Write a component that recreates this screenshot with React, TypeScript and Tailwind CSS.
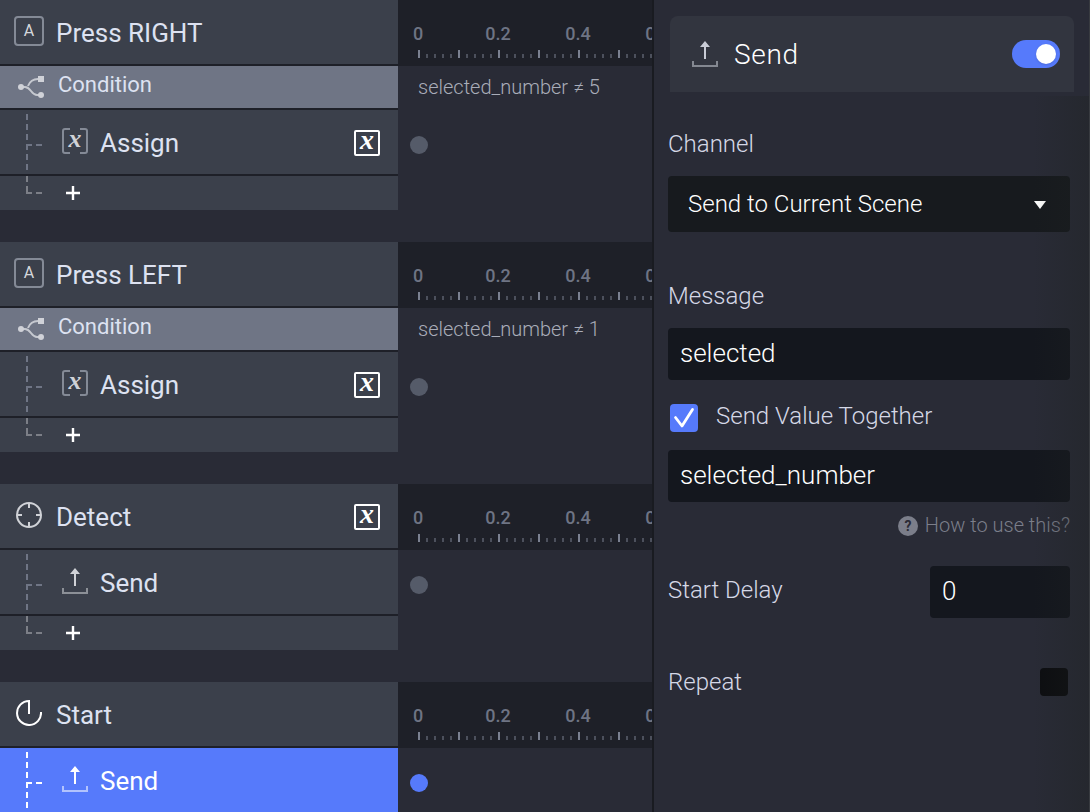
/**
 * Scene editor - trigger timeline with the response inspector
 */

import clsx from 'clsx';
import { useState } from 'react';
import type { JSX, ReactNode } from 'react';

type TriggerIcon = 'key' | 'detect' | 'start';

interface Action {
  kind: 'assign' | 'send';
  name: string;
  variable?: boolean;
  selected?: boolean;
}

interface Trigger {
  id: string;
  icon: TriggerIcon;
  name: string;
  variable?: boolean;
  condition?: string;
  action: Action;
  addable: boolean;
}

const TRIGGERS: Trigger[] = [
  {
    id: 'right',
    icon: 'key',
    name: 'Press RIGHT',
    condition: 'selected_number ≠ 5',
    action: { kind: 'assign', name: 'Assign', variable: true },
    addable: true,
  },
  {
    id: 'left',
    icon: 'key',
    name: 'Press LEFT',
    condition: 'selected_number ≠ 1',
    action: { kind: 'assign', name: 'Assign', variable: true },
    addable: true,
  },
  {
    id: 'detect',
    icon: 'detect',
    name: 'Detect',
    variable: true,
    action: { kind: 'send', name: 'Send' },
    addable: true,
  },
  {
    id: 'start',
    icon: 'start',
    name: 'Start',
    action: { kind: 'send', name: 'Send', selected: true },
    addable: false,
  },
];

const RULER_LABELS = ['0', '0.2', '0.4', '0.6'];
const RULER_TICKS = Array.from({ length: 51 }, (_, i) => i);

function SendIcon(): JSX.Element {
  return (
    <svg width="26" height="26" viewBox="0 0 26 26" className="shrink-0" aria-hidden="true">
      <path d="M1 20v5h24v-5" fill="none" stroke="currentColor" strokeWidth="2" opacity="0.55" />
      <path d="M13 0l5 6h-4v12h-2V6H8z" fill="currentColor" />
    </svg>
  );
}

function AssignIcon(): JSX.Element {
  return (
    <span className="relative flex size-[26px] shrink-0 justify-center">
      <svg width="26" height="26" viewBox="0 0 26 26" className="absolute inset-0" aria-hidden="true">
        <path
          d="M8 1H3a2 2 0 0 0-2 2v20a2 2 0 0 0 2 2h5M18 1h5a2 2 0 0 1 2 2v20a2 2 0 0 1-2 2h-5"
          fill="none"
          stroke="#848a96"
          strokeWidth="2"
        />
      </svg>
      <span className="font-['Liberation_Serif',serif] text-[26px] leading-[22px] font-bold italic">x</span>
    </span>
  );
}

function VariableBadge(): JSX.Element {
  return (
    <span className="mt-1 ml-auto flex size-[26px] items-center justify-center rounded-xs border-2 border-white pb-1.5 font-['Liberation_Serif',serif] text-[28px] leading-4 font-bold text-white italic">
      x
    </span>
  );
}

function TriggerGlyph({ icon }: { icon: TriggerIcon }): JSX.Element {
  if (icon === 'key') {
    return (
      <span className="flex size-[30px] items-center justify-center rounded border-2 border-[#848a96] text-base leading-5 text-[#d5d7dc]">
        A
      </span>
    );
  }
  if (icon === 'detect') {
    return (
      <svg width="26" height="26" viewBox="0 0 26 26" fill="none" stroke="#d0d2d7" strokeWidth="2" aria-hidden="true">
        <circle cx="13" cy="13" r="12" />
        <path d="M13 1v5M13 20v5M1 13h5M20 13h5" />
      </svg>
    );
  }
  return (
    <svg width="26" height="26" viewBox="0 0 26 26" fill="none" stroke="#fff" strokeWidth="2" aria-hidden="true">
      <path d="M13 14V1A12 12 0 1 0 25 12" />
    </svg>
  );
}

function ConditionIcon(): JSX.Element {
  return (
    <svg width="26" height="22" viewBox="0 0 26 22" className="shrink-0" aria-hidden="true">
      <path
        d="M3 11h4c6 0 6 8 12 8h4M10 10c2-5 5-7 10-7"
        fill="none"
        stroke="#c6c9d0"
        strokeWidth="2"
      />
      <circle cx="3" cy="11" r="3" fill="#d0d2d8" />
      <circle cx="23" cy="19" r="3" fill="#d0d2d8" />
      <rect x="20" width="6" height="6" fill="#d0d2d8" />
    </svg>
  );
}

function Ruler(): JSX.Element {
  return (
    <div className="flex h-[66px] flex-col overflow-hidden bg-[#1e2028] pt-6">
      <div className="-ml-5 flex text-lg leading-5 font-medium text-[#6e7484]">
        {RULER_LABELS.map((label) => (
          <span key={label} className="w-20 shrink-0 text-center">
            {label}
          </span>
        ))}
      </div>
      <div className="mt-1.5 flex h-2 items-end pl-[17px]">
        {RULER_TICKS.map((tick) => (
          <span key={tick} className="flex w-2 shrink-0 justify-center">
            <span className={clsx('w-0.5', tick % 5 === 0 ? 'h-2 bg-[#7b8191]' : 'h-1 bg-[#4c505c]')} />
          </span>
        ))}
      </div>
    </div>
  );
}

function TriggerBlock({ trigger }: { trigger: Trigger }): JSX.Element {
  const { action } = trigger;

  return (
    <section className="flex">
      {/* Tree column */}
      <div className="w-[398px] shrink-0 bg-[#1e2028] text-[#dde2f1]">
        <div className="flex h-16 items-center gap-3 bg-[#3b404b] pr-[18px] pb-0.5 pl-3.5">
          <span className="flex w-[30px] justify-center">
            <TriggerGlyph icon={trigger.icon} />
          </span>
          <h2 className="pt-1 text-[26px] leading-8">{trigger.name}</h2>
          {trigger.variable && <VariableBadge />}
        </div>

        {trigger.condition && (
          <div className="mt-0.5 flex h-[42px] items-center gap-3.5 bg-[#6f7585] pl-[18px]">
            <ConditionIcon />
            <span className="pb-1 text-[22px] leading-7">Condition</span>
          </div>
        )}

        <div
          className={clsx(
            'mt-0.5 flex h-16 items-center pr-[18px] pb-0.5 pl-[26px]',
            action.selected ? 'bg-[#567afb] text-white' : 'bg-[#3b404b]',
          )}
        >
          <svg
            width="16"
            height="64"
            viewBox="0 0 16 64"
            className={clsx('mt-0.5 mr-5 shrink-0', action.selected ? 'text-white' : 'text-[#6f7585]')}
            fill="none"
            stroke="currentColor"
            strokeWidth="2"
            aria-hidden="true"
          >
            <path d="M1 4v56M0 35h16" strokeDasharray="6 4" />
          </svg>
          <span className={action.selected ? 'text-white' : 'text-[#d0d2d7]'}>
            {action.kind === 'send' ? <SendIcon /> : <AssignIcon />}
          </span>
          <span className="pt-1 pl-3 text-[26px] leading-8">{action.name}</span>
          {action.variable && <VariableBadge />}
        </div>

        {trigger.addable && (
          <div className="mt-0.5 flex h-[34px] items-center bg-[#3b404b] pl-[26px]">
            <svg width="16" height="34" viewBox="0 0 16 34" className="mr-6" fill="none" stroke="#7c7f87" strokeWidth="2" aria-hidden="true">
              <path d="M1 0v6M1 10v7h5M10 17h6" />
            </svg>
            <button type="button" aria-label="Add action" className="text-white">
              <svg width="14" height="14" viewBox="0 0 14 14" stroke="currentColor" strokeWidth="2.4" aria-hidden="true">
                <path d="M7 0v14M0 7h14" />
              </svg>
            </button>
          </div>
        )}
      </div>

      {/* Track column */}
      <div className="min-w-0 flex-1">
        <Ruler />
        {trigger.condition && (
          <div className="flex h-11 items-center overflow-hidden pb-0.5 pl-5 text-xl leading-7 font-light whitespace-nowrap text-[#a9adb9]">
            {trigger.condition}
          </div>
        )}
        <div className="px-3 pt-[26px]">
          <div className={clsx('size-[18px] rounded-full', action.selected ? 'bg-[#567afb]' : 'bg-[#555b69]')} />
        </div>
      </div>
    </section>
  );
}

function FieldLabel({ htmlFor, children }: { htmlFor: string; children: ReactNode }): JSX.Element {
  return (
    <label htmlFor={htmlFor} className="text-2xl leading-8 font-light text-[#d5d8e6]">
      {children}
    </label>
  );
}

const INPUT_CLASS = 'h-[52px] rounded bg-[#14171e] px-3 pb-0.5 text-[26px] font-light text-white outline-none';

function Inspector(): JSX.Element {
  const [enabled, setEnabled] = useState(true);
  const [message, setMessage] = useState('selected');
  const [sendValue, setSendValue] = useState(true);
  const [value, setValue] = useState('selected_number');
  const [delay, setDelay] = useState('0');
  const [repeat, setRepeat] = useState(false);

  return (
    <aside className="relative w-[438px] shrink-0 overflow-hidden border-r border-l-2 border-r-[#383b40] border-l-[#191b21]">
      {/* Title */}
      <div className="pt-4 pr-[15px] pl-4">
        <div className="flex h-[76px] items-center rounded-t-lg bg-[#32353f] pr-3.5 pl-[22px] text-[#c9ccd6]">
          <SendIcon />
          <h1 className="pt-0.5 pl-4 text-[28px] leading-9 font-light tracking-wide text-white">Send</h1>
          <button
            type="button"
            role="switch"
            aria-checked={enabled}
            aria-label="Enabled"
            onClick={() => setEnabled(!enabled)}
            className={clsx(
              'ml-auto flex h-7 w-12 items-center rounded-full px-1',
              enabled ? 'justify-end bg-[#567afb]' : 'bg-[#14171e]',
            )}
          >
            <span className="size-5 rounded-full bg-white shadow" />
          </button>
        </div>
      </div>

      {/* Fields */}
      <div className="flex flex-col pt-9 pr-[19px] pl-3.5">
        <FieldLabel htmlFor="channel">Channel</FieldLabel>
        <div className="relative mt-4 flex flex-col">
          <select
            id="channel"
            className="h-14 appearance-none rounded bg-[#171a1e] px-5 text-2xl font-light text-white outline-none"
          >
            <option>Send to Current Scene</option>
          </select>
          <svg
            width="12"
            height="8"
            viewBox="0 0 12 8"
            className="pointer-events-none absolute top-[25px] right-6 fill-white"
            aria-hidden="true"
          >
            <path d="M0 0h12L6 8z" />
          </svg>
        </div>

        <div className="mt-12 flex flex-col gap-4">
          <FieldLabel htmlFor="message">Message</FieldLabel>
          <input
            id="message"
            type="text"
            value={message}
            onChange={(e) => setMessage(e.target.value)}
            className={INPUT_CLASS}
          />
        </div>

        <div className="mt-6 flex h-7 items-center gap-[18px] pl-0.5">
          <span className="relative flex size-7">
            <input
              id="send-value"
              type="checkbox"
              checked={sendValue}
              onChange={(e) => setSendValue(e.target.checked)}
              className="size-7 appearance-none rounded bg-[#0d0e11] checked:bg-[#567afb]"
            />
            {sendValue && (
              <svg
                width="28"
                height="28"
                viewBox="0 0 28 28"
                className="pointer-events-none absolute inset-0"
                fill="none"
                stroke="#fff"
                strokeWidth="2.8"
                strokeLinecap="round"
                strokeLinejoin="round"
                aria-hidden="true"
              >
                <path d="M5.500 13.500L12 22 22.500 5.500" />
              </svg>
            )}
          </span>
          <span className="flex pb-1">
            <FieldLabel htmlFor="send-value">Send Value Together</FieldLabel>
          </span>
        </div>
        <input
          type="text"
          aria-label="Value"
          value={value}
          onChange={(e) => setValue(e.target.value)}
          className={clsx(INPUT_CLASS, 'mt-[18px]')}
        />
        <a href="#help" className="mt-3 flex h-6 items-center gap-[7px] self-end text-xl leading-6 font-light text-[#7b7e8a]">
          <span className="flex size-5 items-center justify-center rounded-full bg-[#7b7e8a] text-sm leading-5 font-bold text-[#2a2b36]">
            ?
          </span>
          <span className="pb-0.5">How to use this?</span>
        </a>

        <div className="mt-7 flex items-center justify-between">
          <span className="flex pb-1">
            <FieldLabel htmlFor="delay">Start Delay</FieldLabel>
          </span>
          <input
            id="delay"
            type="text"
            value={delay}
            onChange={(e) => setDelay(e.target.value)}
            className={clsx(INPUT_CLASS, 'w-[140px]')}
          />
        </div>

        <div className="mt-12 flex items-center justify-between pr-0.5">
          <FieldLabel htmlFor="repeat">Repeat</FieldLabel>
          <input
            id="repeat"
            type="checkbox"
            checked={repeat}
            onChange={(e) => setRepeat(e.target.checked)}
            className="size-7 appearance-none rounded bg-[#0d0e11] checked:bg-[#567afb]"
          />
        </div>
      </div>

      {/* Edge shade */}
      <div className="pointer-events-none absolute top-24 right-0 bottom-0 w-14 bg-linear-to-r from-transparent to-[#1e2220]/35" />
    </aside>
  );
}

export default function App(): JSX.Element {
  return (
    <div className="flex h-screen overflow-hidden bg-[#292b36] font-[Roboto,sans-serif]">
      <main className="flex min-w-0 flex-1 flex-col gap-8 overflow-hidden">
        {TRIGGERS.map((trigger) => (
          <TriggerBlock key={trigger.id} trigger={trigger} />
        ))}
      </main>
      <Inspector />
    </div>
  );
}
